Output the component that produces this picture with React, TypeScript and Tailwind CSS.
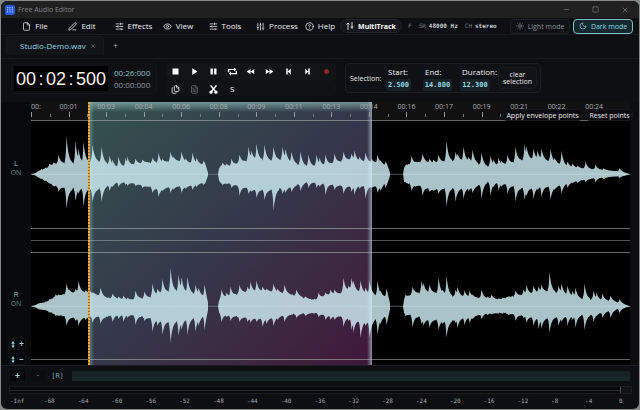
import React, { useState } from 'react';
import {
  CircleHelp,
  Eye,
  File,
  Files,
  FileText,
  Minus,
  Moon,
  PenLine,
  SlidersHorizontal,
  SlidersVertical,
  Square,
  Sun,
  X,
} from 'lucide-react';

type Sample = [x: number, up: number, down: number];

interface Clip {
  body: Sample[];
  peaks: Sample[];
}

const TRACK_START = 31;
const TRACK_WIDTH = 599;
const HALF = 54;

const leftChannel: Clip[] = [
  {
    body: [
      [31, 0, 0], [35, 1, 1], [38, 3, 3], [42, 5, 5], [48, 7, 8], [54, 10, 12], [62, 11, 13], [70, 11, 15], [80, 11, 13],
      [88, 12, 14], [94, 14, 16], [101, 12, 14], [108, 10, 11], [116, 7, 8], [126, 8, 8], [134, 10, 9], [146, 12, 12],
      [160, 11, 15], [173, 14, 12], [187, 12, 12], [200, 10, 9], [205, 9, 8], [207, 3, 3], [208, 0, 0],
    ],
    peaks: [
      [49, 11, 9], [53, 12, 11], [58, 20, 18], [66, 39, 35], [75, 34, 27], [78, 26, 20], [83, 33, 33], [92, 30, 28], [101, 28, 28],
      [109, 19, 17], [112, 15, 13], [118, 18, 13], [125, 17, 11], [127, 18, 12], [135, 16, 12], [142, 15, 14], [152, 17, 19],
      [158, 22, 23], [162, 16, 17], [170, 23, 19], [173, 18, 16], [181, 23, 19], [185, 16, 15], [192, 22, 16], [196, 17, 13], [203, 14, 11],
    ],
  },
  {
    body: [
      [218, 0, 0], [219, 6, 6], [221, 8, 9], [230, 8, 9], [240, 12, 12], [253, 15, 15], [270, 14, 16], [283, 15, 14], [293, 11, 12],
      [306, 8, 8], [313, 8, 8], [323, 9, 9], [337, 12, 11], [350, 15, 12], [360, 13, 11], [370, 12, 12], [380, 11, 12],
      [387, 8, 7], [389, 3, 3], [390, 0, 0],
    ],
    peaks: [
      [222, 12, 11], [226, 11, 10], [231, 16, 14], [239, 20, 22], [248, 28, 20], [251, 24, 18], [256, 31, 24], [264, 30, 26],
      [273, 28, 37], [282, 28, 20], [285, 26, 19], [291, 23, 18], [300, 23, 17], [308, 20, 14], [316, 20, 14], [319, 17, 13],
      [325, 20, 21], [334, 21, 16], [343, 23, 20], [351, 21, 18], [354, 24, 21], [359, 18, 15], [365, 22, 25], [371, 16, 14], [377, 20, 19],
      [380, 14, 17], [385, 13, 14],
    ],
  },
  {
    body: [
      [403, 0, 0], [404, 6, 7], [406, 10, 9], [412, 10, 10], [422, 13, 12], [432, 11, 15], [446, 13, 14], [460, 14, 14],
      [473, 12, 13], [486, 8, 8], [500, 9, 8], [510, 11, 11], [520, 14, 14], [530, 15, 14], [541, 15, 12], [553, 12, 13],
      [566, 8, 9], [580, 6, 6], [593, 5, 4], [606, 4, 3], [619, 3, 2], [627, 1, 1], [630, 0, 0],
    ],
    peaks: [
      [411, 19, 17], [415, 13, 13], [422, 21, 22], [429, 16, 18], [433, 15, 17], [438, 20, 20], [446, 34, 33], [455, 23, 28],
      [457, 21, 20], [463, 28, 25], [468, 18, 17], [472, 25, 19], [481, 22, 25], [490, 19, 22], [493, 15, 13], [498, 17, 17],
      [501, 14, 13], [507, 20, 20], [515, 28, 28], [524, 31, 26], [526, 29, 22], [533, 26, 25], [537, 24, 16], [541, 26, 23], [550, 26, 26],
      [554, 17, 16], [561, 24, 20], [567, 13, 14], [572, 11, 9], [577, 9, 9], [585, 13, 8], [595, 10, 8], [603, 6, 5], [619, 6, 4],
    ],
  },
];

const rightChannel: Clip[] = [
  {
    body: [
      [31, 0, 0], [35, 1, 1], [39, 3, 3], [45, 4, 4], [52, 8, 7], [60, 11, 9], [68, 13, 11], [80, 14, 12], [91, 14, 10], [98, 11, 10],
      [104, 9, 11], [115, 8, 9], [127, 6, 8], [140, 8, 10], [150, 9, 12], [160, 13, 14], [170, 15, 16], [180, 15, 14],
      [190, 13, 12], [200, 11, 11], [205, 9, 8], [207, 3, 3], [208, 0, 0],
    ],
    peaks: [
      [55, 12, 10], [58, 12, 10], [66, 23, 20], [69, 17, 12], [75, 18, 15], [78, 26, 20], [85, 16, 14], [92, 14, 17], [100, 19, 18],
      [112, 13, 16], [118, 10, 13], [123, 11, 16], [127, 9, 12], [135, 16, 19], [144, 15, 15], [152, 23, 26], [157, 18, 20],
      [162, 28, 29], [170, 39, 37], [178, 32, 30], [181, 30, 24], [187, 30, 29], [195, 22, 26], [198, 19, 20], [204, 22, 24],
    ],
  },
  {
    body: [
      [218, 0, 0], [219, 6, 6], [221, 8, 8], [230, 10, 9], [243, 14, 11], [256, 15, 12], [270, 15, 12], [283, 13, 9],
      [296, 11, 8], [309, 7, 7], [316, 7, 7], [326, 11, 9], [340, 13, 10], [350, 17, 12], [360, 14, 15], [370, 12, 15],
      [380, 10, 11], [387, 9, 9], [389, 3, 3], [390, 0, 0],
    ],
    peaks: [
      [221, 17, 16], [226, 14, 11], [230, 20, 15], [239, 22, 16], [247, 20, 16], [250, 25, 17], [256, 26, 16], [262, 20, 21],
      [266, 18, 18], [273, 23, 20], [277, 18, 14], [284, 22, 16], [296, 17, 12], [305, 10, 10], [318, 14, 11], [325, 14, 14], [330, 17, 14],
      [334, 17, 14], [343, 29, 21], [348, 21, 15], [351, 29, 24], [353, 26, 27], [360, 26, 32], [365, 19, 20], [369, 27, 32], [377, 26, 29],
      [380, 16, 18], [386, 18, 19],
    ],
  },
  {
    body: [
      [403, 0, 0], [404, 6, 6], [406, 9, 8], [414, 13, 9], [424, 14, 13], [440, 13, 14], [450, 10, 15], [460, 10, 12],
      [473, 9, 10], [486, 8, 7], [497, 7, 7], [507, 9, 7], [520, 11, 9], [533, 13, 11], [545, 15, 12], [555, 14, 11],
      [565, 12, 10], [577, 8, 9], [590, 7, 9], [602, 6, 6], [613, 5, 4], [621, 3, 2], [627, 1, 1], [630, 0, 0],
    ],
    peaks: [
      [405, 12, 10], [412, 20, 22], [421, 26, 18], [423, 24, 20], [429, 22, 22], [438, 29, 24], [442, 17, 18], [446, 31, 32],
      [455, 17, 17], [457, 20, 22], [464, 16, 19], [469, 16, 17], [472, 12, 13], [481, 17, 13], [487, 10, 9], [491, 12, 8], [508, 10, 9],
      [515, 16, 15], [523, 17, 12], [526, 22, 17], [533, 21, 20], [538, 20, 23], [541, 22, 23], [549, 35, 27], [558, 21, 20],
      [561, 23, 16], [567, 21, 20], [572, 16, 14], [575, 19, 22], [584, 23, 24], [593, 16, 16], [596, 14, 10], [602, 13, 12],
      [610, 11, 12], [619, 7, 7],
    ],
  },
];

const bodyAt = (body: Sample[], x: number, side: 1 | 2) => {
  const i = Math.max(1, body.findIndex((s) => s[0] >= x));
  const a = body[i - 1];
  const b = body[i];
  return a[side] + ((b[side] - a[side]) * (x - a[0])) / (b[0] - a[0]);
};

const clipPath = ({ body, peaks }: Clip) => {
  const from = body[0][0];
  const to = body[body.length - 1][0];
  const edge = (side: 1 | 2) => {
    const points: [number, number][] = [];
    for (let x = from; x <= to; x += 0.5) {
      const base = bodyAt(body, x, side);
      const ripple = base > 4 ? Math.sin(x * 2.3 + side) * Math.cos(x * 0.9) * 0.8 : 0;
      let level = base + ripple;
      peaks.forEach((p) => {
        const d = x - p[0] - 0.5;
        const extra = p[side] - base;
        if (extra > 0 && d > -2 && d < 6) {
          const fall = d < 0 ? Math.exp(d * 1.4) : Math.exp(-d * 0.5);
          level = Math.max(level, base + extra * fall);
        }
      });
      points.push([x, side === 1 ? HALF - level : HALF + level]);
    }
    return points;
  };
  const all = [...edge(1), ...edge(2).reverse()];
  return `M${all.map(([x, y]) => `${x} ${y.toFixed(1)}`).join('L')}Z`;
};

const Channel: React.FC<{ clips: Clip[] }> = ({ clips }) => (
  <div className="relative z-10 flex min-h-0 flex-1 flex-col border-y border-[#b4bcbe]/55">
    <svg
      viewBox={`${TRACK_START} 0 ${TRACK_WIDTH} ${HALF * 2}`}
      preserveAspectRatio="none"
      className="block h-0 w-full flex-1"
      aria-hidden="true"
    >
      <path d={`M31 ${HALF}H630`} stroke="#7f979c" strokeWidth="0.6" />
      {clips.map((clip, i) => (
        <path key={i} d={clipPath(clip)} fill="#d5f4fa" fillOpacity="0.8" />
      ))}
    </svg>
  </div>
);

const menuItems = [
  { label: 'File', icon: File, width: 'w-[44px]' },
  { label: 'Edit', icon: PenLine, width: 'w-[50px]' },
  { label: 'Effects', icon: SlidersHorizontal, width: 'w-[53px]' },
  { label: 'View', icon: Eye, width: 'w-[36px]' },
  { label: 'Tools', icon: SlidersHorizontal, width: 'w-[58px]' },
  { label: 'Process', icon: SlidersVertical, width: 'w-[46px]' },
  { label: 'Help', icon: CircleHelp, width: 'w-[40px]' },
];

const transport = [
  { label: 'Stop', d: 'M2 2H10V10H2Z' },
  { label: 'Play', d: 'M3 1.5L10 6L3 10.5Z' },
  { label: 'Pause', d: 'M2 2H5.2V10H2ZM6.8 2H10V10H6.8Z' },
  { label: 'Loop', d: 'M0 7V2.5H8V0.5L11 3.2L8 6V4H1.7V7ZM12 5V9.5H4V11.5L1 8.8L4 6V8H10.3V5Z' },
  { label: 'Rewind', d: 'M6 2.5V9.5L1 6ZM11 2.5V9.5L6 6Z' },
  { label: 'Fast forward', d: 'M1 2.5V9.5L6 6ZM6 2.5V9.5L11 6Z' },
  { label: 'Go to start', d: 'M3 2H5V10H3ZM9 2V10L5 6Z' },
  { label: 'Go to end', d: 'M7 2H9V10H7ZM3 2V10L7 6Z' },
];

const times = ['00:', '00:01', '00:03', '00:04', '00:06', '00:08', '00:09', '00:11', '00:13', '00:14', '00:16', '00:17', '00:19', '00:21', '00:22', '00:24'];

const levels = ['-Inf', ...Array.from({ length: 17 }, (_, i) => String(-68 + i * 4))];

const selection = [
  { id: 'start', label: 'Start:', value: '2.500', width: 'w-[37px]', box: 'w-[25px]' },
  { id: 'end', label: 'End:', value: '14.800', width: 'w-[37px]', box: 'w-[29px]' },
  { id: 'duration', label: 'Duration:', value: '12.300', width: 'w-[38px]', box: 'w-[30px]' },
];

const TitleBar: React.FC = () => (
  <header className="flex h-[17px] items-center bg-[#202020] pl-1 text-[#858585]">
    <svg viewBox="0 0 10 10" className="mr-[3px] size-[10px]" aria-hidden="true">
      <rect width="10" height="10" rx="2" fill="#2459e0" />
      <path d="M2.7 2V8M5 2V8M7.3 2V8" stroke="#b9d0ff" strokeWidth="1" strokeDasharray="1.4 0.7" />
    </svg>
    <h1 className="flex-1 text-[7px] leading-none">Free Audio Editor</h1>
    <div className="flex">
      <button aria-label="Minimize" className="flex w-[29px] justify-center"><Minus size={7} /></button>
      <button aria-label="Maximize" className="flex w-[29px] justify-center"><Square size={7} /></button>
      <button aria-label="Close" className="flex w-[29px] justify-center"><X size={8} /></button>
    </div>
  </header>
);

const MenuBar: React.FC<{ dark: boolean; setDark: (v: boolean) => void }> = ({ dark, setDark }) => {
  const on = 'border-[#7fc0c8] bg-[#13282f] text-[#8fdbe3]';
  const off = 'border-[#1d2025] bg-[#0f1114] text-[#8c9296]';
  return (
    <nav className="flex h-[17px] items-center border-b border-[#17191d] pl-3 text-[8px] leading-none whitespace-nowrap">
      {menuItems.map(({ label, icon: Icon, width }) => (
        <button key={label} className={`flex shrink-0 items-center justify-center gap-1 font-medium text-[#ececec] ${width}`}>
          <Icon size={9} className="shrink-0" />
          {label}
        </button>
      ))}
      <button className="flex h-[14px] w-[62px] shrink-0 items-center justify-center gap-1 rounded-full border border-[#202329] bg-[#14161a] text-[7px] font-bold text-white">
        <svg viewBox="0 0 8 8" className="size-2" fill="none" stroke="currentColor" strokeWidth="0.8" aria-hidden="true">
          <path d="M2 8V1M0.5 2.5L2 1L3.5 2.5M6 0V7M4.5 5H7.5" />
        </svg>
        MultiTrack
      </button>
      <div className="flex flex-1 items-center gap-[3px] pl-[6px] font-['DejaVu_Sans_Mono',monospace] text-[6px] text-[#777c80]">
        <span className="pr-1">F</span>
        <span>SR</span>
        <span className="pr-1 font-bold text-[#c4c8ca]">48000 Hz</span>
        <span>CH</span>
        <span className="font-bold text-[#c4c8ca]">stereo</span>
      </div>
      <div className="flex gap-[3px] pr-[6px] text-[7px]">
        <button
          aria-pressed={!dark}
          onClick={() => setDark(false)}
          className={`flex h-[15px] w-[60px] items-center justify-center gap-1 rounded border ${dark ? off : on}`}
        >
          <Sun size={8} />
          Light mode
        </button>
        <button
          aria-pressed={dark}
          onClick={() => setDark(true)}
          className={`flex h-[15px] w-[60px] items-center justify-center gap-1 rounded border ${dark ? on : off}`}
        >
          <Moon size={8} />
          Dark mode
        </button>
      </div>
    </nav>
  );
};

const Tabs: React.FC = () => (
  <div className="flex h-[24px] items-end border-b border-[#17191d] pb-[3px] pl-[5px] text-[8px] leading-none whitespace-nowrap">
    <div className="flex h-[19px] w-[98px] items-center justify-between rounded-t border border-b-0 border-[#17191e] bg-[#121418] pr-[7px] pl-[13px]">
      <span className="text-[#8fd9e0]">Studio-Demo.wav</span>
      <button aria-label="Close tab" className="text-[#777d82]"><X size={6} /></button>
    </div>
    <button aria-label="New tab" className="h-[19px] pl-[9px] text-[9px] text-[#a3a7aa]">+</button>
  </div>
);

const Toolbar: React.FC = () => (
  <section className="flex h-[43px] items-start gap-[9px] pt-1 pl-[10px]">
    <div className="flex h-[31px] w-[146px] items-center rounded border border-[#131519] bg-[#0e1013] pl-[2px]">
      <div className="flex h-[25px] w-[94px] items-center justify-center bg-black font-['Liberation_Sans',sans-serif] text-[18px] leading-none text-[#fff8ee]">
        00<span className="w-[10px] text-center">:</span>02<span className="w-[10px] text-center">:</span>500
      </div>
      <div className="pl-[6px] text-[8px] leading-[12px]">
        <p className="text-[#93bfc5]">00:26:000</p>
        <p className="text-[#919b9f]">00:00:000</p>
      </div>
    </div>

    <div className="w-[170px] text-white">
      <div className="grid h-[17px] grid-cols-9 items-center justify-items-center rounded bg-[#121418]">
        {transport.map(({ label, d }) => (
          <button key={label} aria-label={label}>
            <svg viewBox="0 0 12 12" className="size-[9px]" fill="currentColor" aria-hidden="true"><path d={d} /></svg>
          </button>
        ))}
        <button aria-label="Record" className="size-[5px] rounded-full bg-[#8e2525]" />
      </div>
      <div className="grid h-[16px] grid-cols-9 items-center justify-items-center rounded bg-[#101216] pt-[2px]">
        <button aria-label="Copy"><Files size={9} /></button>
        <button aria-label="Paste" className="text-[#6e7276]"><FileText size={9} /></button>
        <button aria-label="Cut">
          <svg viewBox="0 0 12 12" className="size-[9px]" fill="none" stroke="currentColor" strokeWidth="2" aria-hidden="true">
            <path d="M2 0.5L9 9M10 0.5L3 9" />
            <circle cx="2.7" cy="9.5" r="1.3" />
            <circle cx="9.3" cy="9.5" r="1.3" />
          </svg>
        </button>
        <button className="text-[8px] leading-none">S</button>
      </div>
    </div>

    <div className="flex h-[30px] w-[196px] items-center rounded border border-[#1a1d21] bg-[#0f1114] pl-1 text-[8px] leading-none text-[#ececec]">
      <span className="w-[36px] text-[7px]">Selection:</span>
      {selection.map(({ id, label, value, width, box }) => (
        <div key={id} className={`flex shrink-0 flex-col gap-[2px] ${width}`}>
          <label htmlFor={id} className="pl-[2px] leading-[11px] font-medium whitespace-nowrap">{label}</label>
          <input
            id={id}
            defaultValue={value}
            className={`h-[12px] rounded-xs bg-[#172127] text-center font-['DejaVu_Sans_Mono',monospace] text-[7px] font-bold text-[#8fd9e0] ${box}`}
          />
        </div>
      ))}
      <button className="h-[22px] w-[39px] rounded border border-[#181b1f] bg-[#111316] text-[7px] leading-[7px]">
        clear selection
      </button>
    </div>
  </section>
);

const Ruler: React.FC = () => (
  <div className="flex h-[18px] bg-[#111] text-[7px] leading-none text-[#a8adae]">
    {times.map((time, i) => (
      <div key={time} className="relative z-10 h-full w-[6.27%] shrink-0">
        <span className={`absolute top-px left-0 leading-[7px] ${i === 0 ? '' : '-translate-x-1/2'}`}>{time}</span>
        <i className="absolute bottom-[3px] left-0 h-[5px] w-px bg-[#999]" />
        <i className="absolute bottom-[3px] left-1/2 h-[3px] w-px bg-[#777]" />
      </div>
    ))}
  </div>
);

const ChannelLabel: React.FC<{ name: string }> = ({ name }) => (
  <button className="flex flex-1 flex-col items-center justify-center text-[#7fb3a4]">
    <span className="text-[8px] leading-[10px]">{name}</span>
    <span className="text-[7px] leading-[10px] text-[#668f86]">ON</span>
  </button>
);

const ZoomButton: React.FC<{ sign: string; label: string }> = ({ sign, label }) => (
  <button
    aria-label={label}
    className="flex h-[12px] w-[17px] items-center justify-center gap-1 rounded-xs border border-[#12161a] bg-[#05080a] text-[8px] leading-none font-bold text-[#8fd9e0]"
  >
    <svg viewBox="0 0 4 8" className="h-[7px] w-1" fill="currentColor" aria-hidden="true">
      <path d="M2 0L4 3H2.5V5H4L2 8L0 5H1.5V3H0Z" />
    </svg>
    {sign}
  </button>
);

const Editor: React.FC = () => (
  <section className="flex min-h-0 flex-1 bg-[#07090b]">
    <aside className="relative flex w-[30px] shrink-0 flex-col">
      <ChannelLabel name="L" />
      <ChannelLabel name="R" />
      <div className="absolute bottom-0 left-2 flex flex-col gap-[3px]">
        <ZoomButton sign="+" label="Zoom in vertically" />
        <ZoomButton sign="−" label="Zoom out vertically" />
      </div>
    </aside>

    <div className="relative flex min-w-0 flex-1 flex-col bg-black">
      <Ruler />

      {/* selected range, behind the waveforms */}
      <div className="absolute inset-y-0 left-[9.6%] w-[47.4%] bg-linear-to-br from-[#34524f] via-[#34384a] to-[#401739]">
        <div className="h-[10px] bg-linear-to-b from-[#8bb8b4]/70 to-transparent" />
        <div className="absolute inset-y-0 left-0 w-[5px] bg-linear-to-r from-[#a4d8d2]/45 to-transparent" />
        <div className="absolute inset-y-0 right-0 w-[5px] bg-linear-to-l from-[#a5b8c6]/75 to-transparent" />
      </div>

      <Channel clips={leftChannel} />
      <div className="relative z-10 flex h-[23px] shrink-0 items-center">
        <div className="h-px w-full bg-[#b4bcbe]/45" />
      </div>
      <Channel clips={rightChannel} />
      <div className="h-[5px] shrink-0" />

      <div className="absolute inset-y-0 left-[9.5%] z-10 w-[2px] bg-[repeating-linear-gradient(to_bottom,#f2a83a_0_2px,#8d6c3c_2px_3px)]" />

      <div className="absolute top-[7px] -right-[3px] z-20 flex gap-1 text-[7px] text-[#ececec]">
        <button className="h-[12px] w-[79px] rounded border border-[#15171a] bg-[#0a0b0d] leading-[7px] whitespace-nowrap">Apply envelope points</button>
        <button className="h-[12px] w-[47px] rounded border border-[#15171a] bg-[#0a0b0d] leading-[7px] whitespace-nowrap">Reset points</button>
      </div>
    </div>
    <div className="w-[9px] shrink-0 bg-[#0b0d10]" />
  </section>
);

const Footer: React.FC = () => (
  <footer className="h-[44px] border-t border-[#1b1d21] pt-1 font-['DejaVu_Sans_Mono',monospace] leading-none">
    <div className="flex items-center pr-[9px] pl-[9px]">
      <button aria-label="Zoom in" className="mr-[6px] flex h-[11px] w-[15px] items-center justify-center bg-[#060708] pt-px text-[8px] font-bold text-[#a8e2e8]">+</button>
      <button aria-label="Zoom out" className="mr-[5px] flex h-[11px] w-[14px] items-center justify-center bg-[#0b0c0f] pt-px text-[8px] text-[#6d7a80]">-</button>
      <button aria-label="Reset zoom" className="mr-[7px] flex h-[11px] w-[15px] items-center justify-center pt-[2px] text-[7px] text-[#7aa0a4]">[R]</button>
      <div className="h-[10px] flex-1 bg-linear-to-b from-[#152023] to-[#1a2a2c]" />
    </div>
    <div className="mt-[5px] mr-[7px] ml-[8px] flex h-2 items-center border border-[#1b1d20] bg-[#08090a]">
      <div className="h-px flex-1 bg-[#25282a]" />
      <div className="h-full w-[11px] border-l border-[#4a4d50] bg-[#111315]" />
    </div>
    <div className="mt-[3px] mr-[7px] ml-[9px] flex text-[6px] leading-[8px] text-[#a4a8aa]">
      {levels.map((level) => (
        <span key={level} className="flex-1">{level}</span>
      ))}
      <span className="w-[13px]">0</span>
    </div>
  </footer>
);

const App: React.FC = () => {
  const [dark, setDark] = useState(true);

  return (
    <div className="h-screen bg-[#858a88] p-px font-['Open_Sans','Noto_Sans',sans-serif]">
      <main className="flex h-full flex-col overflow-hidden rounded-md bg-[#0d0f12]">
        <TitleBar />
        <MenuBar dark={dark} setDark={setDark} />
        <Tabs />
        <Toolbar />
        <Editor />
        <Footer />
      </main>
    </div>
  );
};

export default App;
